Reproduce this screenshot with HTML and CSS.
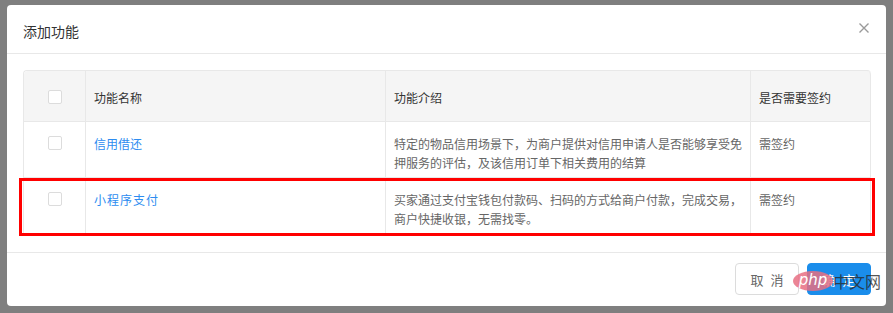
FILE: index.html
```html
<!DOCTYPE html>
<html lang="zh-CN">
<head>
<meta charset="utf-8">
<title>添加功能</title>
<link rel="stylesheet" href="styles.css">
</head>
<body>
<div class="overlay">
  <div class="modal">
    <div class="modal-header">
      <span class="modal-title">添加功能</span>
      <svg class="close" width="10" height="10" viewBox="0 0 10 10"><path d="M0.5 0.5L9.5 9.5M9.5 0.5L0.5 9.5" stroke="#9a9a9a" stroke-width="1.4" fill="none"/></svg>
    </div>
    <div class="modal-body">
      <div class="table-wrap">
        <table class="table">
          <colgroup>
            <col class="c1"><col class="c2"><col class="c3"><col class="c4">
          </colgroup>
          <thead>
            <tr>
              <th class="chk-cell"><span class="checkbox"></span></th>
              <th>功能名称</th>
              <th>功能介绍</th>
              <th>是否需要签约</th>
            </tr>
          </thead>
          <tbody>
            <tr>
              <td class="chk-cell"><span class="checkbox"></span></td>
              <td><a class="link">信用借还</a></td>
              <td class="desc">特定的物品信用场景下，为商户提供对信用申请人是否能够享受免押服务的评估，及该信用订单下相关费用的结算</td>
              <td class="desc">需签约</td>
            </tr>
            <tr>
              <td class="chk-cell"><span class="checkbox"></span></td>
              <td><a class="link spaced">小程序支付</a></td>
              <td class="desc">买家通过支付宝钱包付款码、扫码的方式给商户付款，完成交易，商户快捷收银，无需找零。</td>
              <td class="desc">需签约</td>
            </tr>
          </tbody>
        </table>
        <div class="highlight"></div>
      </div>
    </div>
    <div class="modal-footer">
      <button class="btn btn-default">取 消</button>
      <button class="btn btn-primary">确 定</button>
      <div class="watermark"><span class="wm-logo">php</span><span class="wm-text">中文网</span></div>
    </div>
  </div>
</div>
</body>
</html>
```
FILE: styles.css
```css
* { box-sizing: border-box; }
html, body { margin: 0; padding: 0; }
body {
  font-family: "Noto Sans CJK SC", "Noto Sans", sans-serif;
  background: #7f7f7f;
  width: 893px;
  height: 313px;
  overflow: hidden;
}
.overlay {
  padding: 5px 7px 7px 7px;
}
.modal {
  width: 879px;
  height: 301px;
  background: #fff;
  border-radius: 4px;
  display: flex;
  flex-direction: column;
  position: relative;
}
.modal-header {
  height: 49px;
  border-bottom: 1px solid #e8e8e8;
  padding: 16px 16px 0 16px;
  display: flex;
  justify-content: space-between;
  align-items: flex-start;
}
.modal-title {
  font-size: 14px;
  line-height: 20px;
  color: #333;
}
.close {
  margin-top: 2px;
  margin-right: 1px;
}
.modal-body {
  padding: 16px 16px 0 16px;
  height: 199px;
  border-bottom: 1px solid #e8e8e8;
}
.table-wrap {
  position: relative;
}
.table {
  width: 847px;
  border-collapse: separate;
  border-spacing: 0;
  table-layout: fixed;
  font-size: 12px;
  line-height: 19px;
  border-top: 1px solid #e8e8e8;
  border-left: 1px solid #e8e8e8;
  border-radius: 4px 4px 0 0;
}
.c1 { width: 62px; }
.c2 { width: 300px; }
.c3 { width: 365px; }
.c4 { width: 120px; }
.table th, .table td {
  border-right: 1px solid #e8e8e8;
  border-bottom: 1px solid #e8e8e8;
  text-align: left;
  vertical-align: top;
  font-weight: normal;
}
.table th:last-child { border-top-right-radius: 4px; }
.table th:first-child { border-top-left-radius: 4px; }
.table th {
  background: #f5f5f5;
  color: #333;
  padding: 17px 8px 14px 8px;
}
.table td {
  padding: 12px 8px 5px 8px;
  height: 56px;
}
.table tbody tr:last-child td { height: 57px; }
.table th.chk-cell, .table td.chk-cell {
  text-align: center;
}
.checkbox {
  display: inline-block;
  width: 14px;
  height: 14px;
  border: 1px solid #dcdcdc;
  border-radius: 2px;
  background: #fff;
  vertical-align: top;
  margin-top: 2px;
}
.link {
  color: #2d8cf0;
  font-size: 12px;
  text-decoration: none;
}
.spaced { letter-spacing: 1px; }
.desc { color: #666; }
.highlight {
  position: absolute;
  left: -4px;
  top: 108px;
  width: 856px;
  height: 58px;
  border: 3px solid #ff0000;
}
.modal-footer {
  display: flex;
  justify-content: flex-end;
  gap: 8px;
  padding: 10px 15px 10px 16px;
  position: relative;
}
.btn {
  width: 64px;
  height: 32px;
  border-radius: 4px;
  font-family: "Noto Sans CJK SC", sans-serif;
  font-size: 13px;
  letter-spacing: 2px;
  padding: 0 0 0 2px;
}
.btn-default {
  background: #fff;
  border: 1px solid #dcdcdc;
  color: #666;
}
.btn-primary {
  background: #1a8deb;
  border: 1px solid #1a8deb;
  color: #fff;
}
.watermark {
  position: absolute;
  left: 786px;
  top: 16px;
  display: flex;
  align-items: center;
}
.wm-logo {
  display: inline-block;
  width: 40px;
  height: 20px;
  line-height: 19px;
  border-radius: 50%;
  background: rgba(232, 110, 130, 0.85);
  color: #fff;
  font-family: "DejaVu Sans", sans-serif;
  font-style: italic;
  font-size: 15px;
  text-align: center;
}
.wm-text {
  font-size: 16px;
  color: rgba(40, 40, 40, 0.8);
}
```
